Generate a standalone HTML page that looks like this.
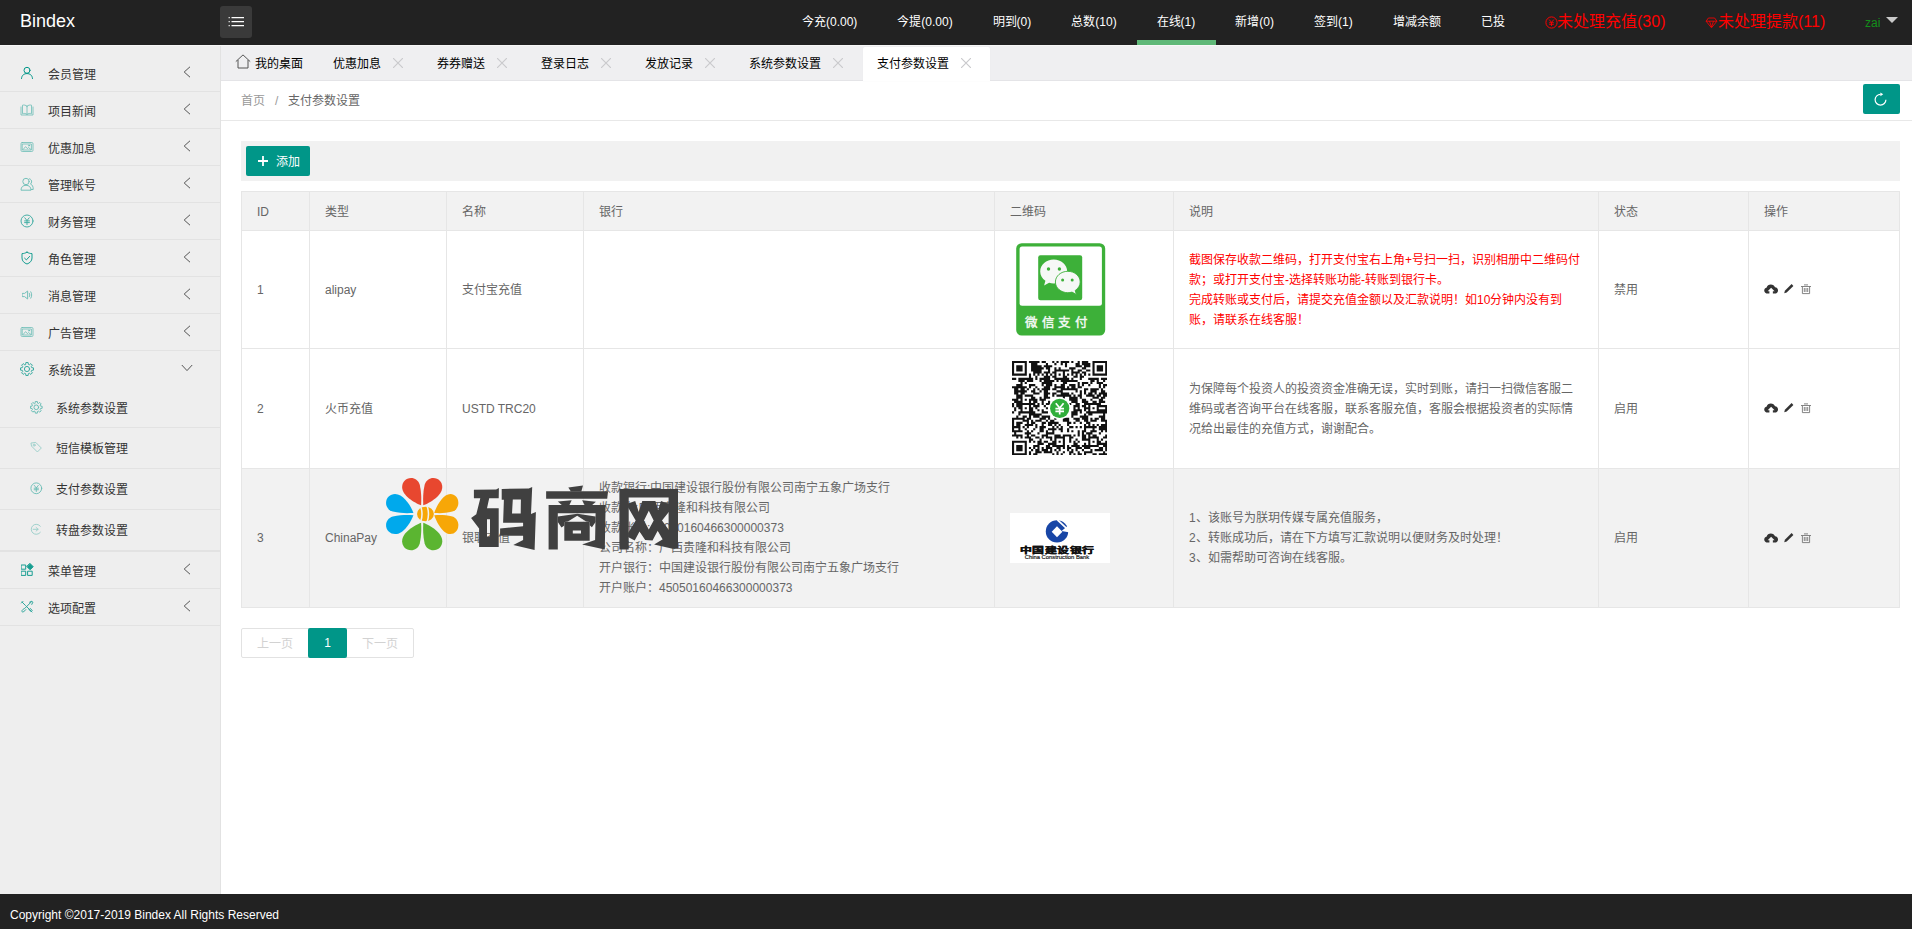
<!DOCTYPE html>
<html lang="zh-CN">
<head>
<meta charset="utf-8">
<title>Bindex</title>
<style>
*{box-sizing:border-box;margin:0;padding:0}
html,body{width:1912px;height:929px;overflow:hidden;background:#fff}
body{font-family:"Liberation Sans",sans-serif;font-size:12px;color:#666;position:relative}
.abs{position:absolute}
.nw{white-space:nowrap}
/* header */
#hd{position:absolute;left:0;top:0;width:1912px;height:45px;background:#222}
#logo{position:absolute;left:20px;top:9px;font-size:18px;color:#fff;line-height:24px}
#ham{position:absolute;left:220px;top:6px;width:32px;height:32px;background:#3a3a3a;border-radius:3px}
.nv{position:absolute;top:0;height:45px;line-height:45px;font-size:12px;color:#fff;white-space:nowrap}
.nv.red{color:#f00;font-size:16px;line-height:43px}
/* sidebar */
#sb{position:absolute;left:0;top:45px;width:221px;height:849px;background:#eee;border-right:1px solid #e2e2e2}
.mi{position:absolute;left:0;width:220px;height:37px;border-bottom:1px solid #e2e2e2;line-height:41px;font-size:12px;color:#333}
.mi span{position:absolute;left:48px;top:0}
.si{position:absolute;left:0;width:220px;height:41px;border-bottom:1px solid #e2e2e2;line-height:42px;font-size:12px;color:#333}
.si span{position:absolute;left:56px;top:0}
/* tabs */
#tabs{position:absolute;left:221px;top:46px;width:1691px;height:35px;background:#efeff1;border-bottom:1px solid #e4e4e7}
.tb{position:absolute;top:0;height:35px;line-height:36px;font-size:12px;color:#000;white-space:nowrap}
/* footer */
#ft{position:absolute;left:0;top:894px;width:1912px;height:35px;background:#222;color:#fff;font-size:12px;line-height:43px;padding-left:10px}
/* table */
.cell{position:absolute;font-size:12px;color:#666;white-space:nowrap;line-height:20px}
.vl{position:absolute;width:1px;background:#e6e6e6;top:191px;height:417px}
.hl{position:absolute;height:1px;background:#e6e6e6;left:241px;width:1659px}
</style>
</head>
<body>
<div id="hd">
  <div id="logo">Bindex</div>
<div id="ham"><svg width="32" height="32" viewBox="0 0 32 32"><g stroke="#fff" stroke-width="1.3"><path d="M11.5 11.6H24M11.5 15.6H24M11.5 19.6H24"/><path d="M8.5 11.6H10M8.5 15.6H10M8.5 19.6H10" opacity=".75"/></g></svg></div>
<div class="nv" style="left:802px">今充(0.00)</div>
<div class="nv" style="left:897.3px">今提(0.00)</div>
<div class="nv" style="left:992.6px">明到(0)</div>
<div class="nv" style="left:1071.3px">总数(10)</div>
<div class="nv" style="left:1156.6px">在线(1)</div>
<div class="nv" style="left:1235.3px">新增(0)</div>
<div class="nv" style="left:1314px">签到(1)</div>
<div class="nv" style="left:1392.6px">增减余额</div>
<div class="nv" style="left:1480.6px">已投</div>
<div class="abs" style="left:1137px;top:40px;width:79px;height:5px;background:#5FB878"></div>
<svg class="abs" style="left:1544.5px;top:16px" width="13" height="13" viewBox="0 0 13 13"><circle cx="6.5" cy="6.5" r="5.6" fill="none" stroke="#f00" stroke-width="1"/><path d="M4.2 3.6L6.5 6.4L8.8 3.6M6.5 6.4V10M4.2 6.7H8.8M4.2 8.3H8.8" fill="none" stroke="#f00" stroke-width=".9"/></svg>
<div class="nv red" style="left:1557px">未处理充值(30)</div>
<svg class="abs" style="left:1705px;top:16.8px" width="13" height="12" viewBox="0 0 13 12"><path d="M3.4 1H9.6L11.9 4.2L6.5 10.8L1.1 4.2ZM1.1 4.2H11.9M4.5 4.2L6.5 10L8.5 4.2" fill="none" stroke="#f00" stroke-width=".85"/></svg>
<div class="nv red" style="left:1718px">未处理提款(11)</div>
<div class="nv" style="left:1865px;color:#12901a;line-height:46px">zai</div>
<div class="abs" style="left:1885.5px;top:17px;width:0;height:0;border-left:6px solid transparent;border-right:6px solid transparent;border-top:6.5px solid #c9c9c9"></div>
</div>
<div id="sb">
<div class="mi" style="top:10px"><svg class="abs" style="left:20px;top:11px;opacity:1" width="14" height="14" viewBox="0 0 14 14" fill="none" stroke="#009688" stroke-width="1" stroke-linecap="round" stroke-linejoin="round"><circle cx="7" cy="4.3" r="3"/><path d="M1.5 12.5C1.8 9 4.2 7.6 7 7.6S12.2 9 12.5 12.5"/></svg><span>会员管理</span><svg class="abs" style="left:183px;top:11px" width="8" height="12" viewBox="0 0 8 12" fill="none" stroke="#555" stroke-width="1"><path d="M7 .8L1.2 6L7 11.2"/></svg></div>
<div class="mi" style="top:47px"><svg class="abs" style="left:20px;top:11px;opacity:0.55" width="14" height="14" viewBox="0 0 14 14" fill="none" stroke="#009688" stroke-width=".8" stroke-linecap="round" stroke-linejoin="round"><path d="M7 3.2C5.8 2 3.8 1.8 2.5 2.2V10.6C3.8 10.2 5.8 10.4 7 11.4C8.2 10.4 10.2 10.2 11.5 10.6V2.2C10.2 1.8 8.2 2 7 3.2ZM7 3.2V11.4M1 4V12H13V4"/></svg><span>项目新闻</span><svg class="abs" style="left:183px;top:11px" width="8" height="12" viewBox="0 0 8 12" fill="none" stroke="#555" stroke-width="1"><path d="M7 .8L1.2 6L7 11.2"/></svg></div>
<div class="mi" style="top:84px"><svg class="abs" style="left:20px;top:11px;opacity:0.55" width="14" height="14" viewBox="0 0 14 14" fill="none" stroke="#009688" stroke-width=".8" stroke-linecap="round" stroke-linejoin="round"><rect x="1" y="2.5" width="12" height="9" rx="1.2"/><rect x="2.6" y="4" width="8.8" height="6"/><path d="M3.2 9.4L5.6 6.6L7.3 8.6L8.6 7.6L10.8 9.4"/><circle cx="9" cy="5.6" r=".6"/></svg><span>优惠加息</span><svg class="abs" style="left:183px;top:11px" width="8" height="12" viewBox="0 0 8 12" fill="none" stroke="#555" stroke-width="1"><path d="M7 .8L1.2 6L7 11.2"/></svg></div>
<div class="mi" style="top:121px"><svg class="abs" style="left:20px;top:11px;opacity:0.5" width="14" height="14" viewBox="0 0 14 14" fill="none" stroke="#009688" stroke-width="1" stroke-linecap="round" stroke-linejoin="round"><circle cx="6" cy="4.5" r="3.2"/><path d="M1 12.8C1 10 3 8.3 6 8.3S11 10 11 12.8Z"/><path d="M9.5 1.8C11 2.2 11.8 3.6 11.6 5C11.5 5.9 11 6.6 10.4 7C12.4 7.8 13.3 9.5 13.2 12.5H11.4"/></svg><span>管理帐号</span><svg class="abs" style="left:183px;top:11px" width="8" height="12" viewBox="0 0 8 12" fill="none" stroke="#555" stroke-width="1"><path d="M7 .8L1.2 6L7 11.2"/></svg></div>
<div class="mi" style="top:158px"><svg class="abs" style="left:20px;top:11px;opacity:0.7" width="14" height="14" viewBox="0 0 14 14" fill="none" stroke="#009688" stroke-width="1" stroke-linecap="round" stroke-linejoin="round"><circle cx="7" cy="7" r="6"/><path d="M4.8 3.8L7 6.6L9.2 3.8M7 6.6V10.6M4.6 6.9H9.4M4.6 8.6H9.4"/></svg><span>财务管理</span><svg class="abs" style="left:183px;top:11px" width="8" height="12" viewBox="0 0 8 12" fill="none" stroke="#555" stroke-width="1"><path d="M7 .8L1.2 6L7 11.2"/></svg></div>
<div class="mi" style="top:195px"><svg class="abs" style="left:20px;top:11px;opacity:0.9" width="14" height="14" viewBox="0 0 14 14" fill="none" stroke="#009688" stroke-width="1" stroke-linecap="round" stroke-linejoin="round"><path d="M7 1.2C8.6 2.2 10.4 2.6 12 2.6V7C12 10 9.8 12 7 13C4.2 12 2 10 2 7V2.6C3.6 2.6 5.4 2.2 7 1.2Z"/><path d="M4.6 7.2L6.4 8.9L9.6 5.4"/></svg><span>角色管理</span><svg class="abs" style="left:183px;top:11px" width="8" height="12" viewBox="0 0 8 12" fill="none" stroke="#555" stroke-width="1"><path d="M7 .8L1.2 6L7 11.2"/></svg></div>
<div class="mi" style="top:232px"><svg class="abs" style="left:20px;top:11px;opacity:0.5" width="14" height="14" viewBox="0 0 14 14" fill="none" stroke="#009688" stroke-width="1" stroke-linecap="round" stroke-linejoin="round"><path d="M2.5 5.4H4.6L7.6 3V11L4.6 8.6H2.5Z"/><path d="M9.3 5.2C10 6.2 10 7.8 9.3 8.8M10.8 3.8C12 5.6 12 8.4 10.8 10.2"/></svg><span>消息管理</span><svg class="abs" style="left:183px;top:11px" width="8" height="12" viewBox="0 0 8 12" fill="none" stroke="#555" stroke-width="1"><path d="M7 .8L1.2 6L7 11.2"/></svg></div>
<div class="mi" style="top:269px"><svg class="abs" style="left:20px;top:11px;opacity:0.55" width="14" height="14" viewBox="0 0 14 14" fill="none" stroke="#009688" stroke-width=".8" stroke-linecap="round" stroke-linejoin="round"><rect x="1" y="2.5" width="12" height="9" rx="1.2"/><rect x="2.6" y="4" width="8.8" height="6"/><path d="M3.2 9.4L5.6 6.6L7.3 8.6L8.6 7.6L10.8 9.4"/><circle cx="9" cy="5.6" r=".6"/></svg><span>广告管理</span><svg class="abs" style="left:183px;top:11px" width="8" height="12" viewBox="0 0 8 12" fill="none" stroke="#555" stroke-width="1"><path d="M7 .8L1.2 6L7 11.2"/></svg></div>
<div class="mi" style="top:306px;border-bottom:none"><svg class="abs" style="left:20px;top:11px;opacity:0.75" width="14" height="14" viewBox="0 0 14 14" fill="none" stroke="#009688" stroke-width="1" stroke-linecap="round" stroke-linejoin="round"><circle cx="7" cy="7" r="2.6"/><path d="M5.69 2.28L5.88 0.50L8.12 0.50L8.31 2.28L9.42 2.74L10.81 1.61L12.39 3.19L11.26 4.58L11.72 5.69L13.50 5.88L13.50 8.12L11.72 8.31L11.26 9.42L12.39 10.81L10.81 12.39L9.42 11.26L8.31 11.72L8.12 13.50L5.88 13.50L5.69 11.72L4.58 11.26L3.19 12.39L1.61 10.81L2.74 9.42L2.28 8.31L0.50 8.12L0.50 5.88L2.28 5.69L2.74 4.58L1.61 3.19L3.19 1.61L4.58 2.74Z"/></svg><span>系统设置</span><svg class="abs" style="left:181px;top:13px" width="12" height="8" viewBox="0 0 12 8" fill="none" stroke="#555" stroke-width="1"><path d="M.8 1L6 6.6L11.2 1"/></svg></div>
<div class="si" style="top:343px;height:40px;"><svg class="abs" style="left:30px;top:13px;opacity:0.6000000000000001" width="12.6" height="12.6" viewBox="0 0 14 14" fill="none" stroke="#009688" stroke-width="1" stroke-linecap="round" stroke-linejoin="round"><circle cx="7" cy="7" r="2.6"/><path d="M5.69 2.28L5.88 0.50L8.12 0.50L8.31 2.28L9.42 2.74L10.81 1.61L12.39 3.19L11.26 4.58L11.72 5.69L13.50 5.88L13.50 8.12L11.72 8.31L11.26 9.42L12.39 10.81L10.81 12.39L9.42 11.26L8.31 11.72L8.12 13.50L5.88 13.50L5.69 11.72L4.58 11.26L3.19 12.39L1.61 10.81L2.74 9.42L2.28 8.31L0.50 8.12L0.50 5.88L2.28 5.69L2.74 4.58L1.61 3.19L3.19 1.61L4.58 2.74Z"/></svg><span>系统参数设置</span></div>
<div class="si" style="top:383px;height:41px;"><svg class="abs" style="left:30px;top:13px;opacity:0.36000000000000004" width="12.6" height="12.6" viewBox="0 0 14 14" fill="none" stroke="#009688" stroke-width="1" stroke-linecap="round" stroke-linejoin="round"><path d="M1.5 2.2L6.4 1.6L12.6 7.8L8.2 12.2L2 6Z"/><circle cx="4.6" cy="4.6" r="1.1"/></svg><span>短信模板管理</span></div>
<div class="si" style="top:424px;height:41px;"><svg class="abs" style="left:30px;top:13px;opacity:0.5599999999999999" width="12.6" height="12.6" viewBox="0 0 14 14" fill="none" stroke="#009688" stroke-width="1" stroke-linecap="round" stroke-linejoin="round"><circle cx="7" cy="7" r="6"/><path d="M4.8 3.8L7 6.6L9.2 3.8M7 6.6V10.6M4.6 6.9H9.4M4.6 8.6H9.4"/></svg><span>支付参数设置</span></div>
<div class="si" style="top:465px;height:42px;border-bottom:2px solid #e2e2e2"><svg class="abs" style="left:30px;top:13px;opacity:0.36000000000000004" width="12.6" height="12.6" viewBox="0 0 14 14" fill="none" stroke="#009688" stroke-width="1" stroke-linecap="round" stroke-linejoin="round"><path d="M11.5 3.6A5.6 5.6 0 1 0 11.5 10.4"/><path d="M3.5 7H9M6.8 5L9 7L6.8 9"/></svg><span>转盘参数设置</span></div>
<div class="mi" style="top:507px"><svg class="abs" style="left:20px;top:11px;opacity:0.9" width="14" height="14" viewBox="0 0 14 14" fill="none" stroke="#009688" stroke-width="1" stroke-linecap="round" stroke-linejoin="round"><rect x="1.5" y="2" width="4.2" height="4.2"/><rect x="1.5" y="8.2" width="4.2" height="4.2"/><rect x="8" y="8.2" width="4.2" height="4.2"/><path d="M10.1 .6L13.2 3.7L10.1 6.8L7 3.7Z" fill="#009688"/></svg><span>菜单管理</span><svg class="abs" style="left:183px;top:11px" width="8" height="12" viewBox="0 0 8 12" fill="none" stroke="#555" stroke-width="1"><path d="M7 .8L1.2 6L7 11.2"/></svg></div>
<div class="mi" style="top:544px"><svg class="abs" style="left:20px;top:11px;opacity:0.8" width="14" height="14" viewBox="0 0 14 14" fill="none" stroke="#009688" stroke-width="1" stroke-linecap="round" stroke-linejoin="round"><path d="M2 2L5 5M3 1.4L1.4 3M5.6 5.6L12 12M9 9.6L11 11.6L12.2 10.4L10.2 8.4M11.6 1.6L5 8.2M4.4 8.2L2 10.6C1.4 11.2 2.6 12.6 3.4 12L5.8 9.6M9.6 2.2L11.8 1.2L12.8 2.2L11.8 4.4"/></svg><span>选项配置</span><svg class="abs" style="left:183px;top:11px" width="8" height="12" viewBox="0 0 8 12" fill="none" stroke="#555" stroke-width="1"><path d="M7 .8L1.2 6L7 11.2"/></svg></div>
</div>
<div id="tabs">
<div class="tb" style="left:0;width:98px"><svg class="abs" style="left:14px;top:8px" width="16" height="15" viewBox="0 0 16 15" fill="none" stroke="#555" stroke-width="1"><path d="M.8 7.6L8 .9L15.2 7.6M3 6V14H13V6"/></svg><span class="abs" style="left:34px">我的桌面</span></div>
<span class="tb" style="left:112px">优惠加息</span><svg class="abs" style="left:172.0px;top:12.2px" width="10" height="10" viewBox="0 0 10 10" stroke="#c9c9cc" stroke-width="1.15"><path d="M0 0L10 10M10 0L0 10"/></svg>
<span class="tb" style="left:216px">券券赠送</span><svg class="abs" style="left:276.0px;top:12.2px" width="10" height="10" viewBox="0 0 10 10" stroke="#c9c9cc" stroke-width="1.15"><path d="M0 0L10 10M10 0L0 10"/></svg>
<span class="tb" style="left:320px">登录日志</span><svg class="abs" style="left:380.0px;top:12.2px" width="10" height="10" viewBox="0 0 10 10" stroke="#c9c9cc" stroke-width="1.15"><path d="M0 0L10 10M10 0L0 10"/></svg>
<span class="tb" style="left:424px">发放记录</span><svg class="abs" style="left:484.0px;top:12.2px" width="10" height="10" viewBox="0 0 10 10" stroke="#c9c9cc" stroke-width="1.15"><path d="M0 0L10 10M10 0L0 10"/></svg>
<span class="tb" style="left:528px">系统参数设置</span><svg class="abs" style="left:612.0px;top:12.2px" width="10" height="10" viewBox="0 0 10 10" stroke="#c9c9cc" stroke-width="1.15"><path d="M0 0L10 10M10 0L0 10"/></svg>
<div class="abs" style="left:642px;top:1px;width:127px;height:34px;background:#fff;border-radius:2px 2px 0 0;box-shadow:0 0 1px #e4e4e8"></div>
<span class="tb" style="left:656px">支付参数设置</span><svg class="abs" style="left:740.0px;top:12.2px" width="10" height="10" viewBox="0 0 10 10" stroke="#c9c9cc" stroke-width="1.15"><path d="M0 0L10 10M10 0L0 10"/></svg>
</div>
<div id="main">
<div class="abs" style="left:0;top:45px;width:1912px;height:1px;background:#f7f7f7"></div>
<div class="abs" style="left:221px;top:120px;width:1691px;height:1px;background:#e8e8e8"></div>
<div class="cell" style="left:241px;top:90.5px;color:#999">首页</div>
<div class="cell" style="left:275px;top:90.5px;color:#999">/</div>
<div class="cell" style="left:288px;top:90.5px;color:#666">支付参数设置</div>
<div class="abs" style="left:1863px;top:84px;width:37px;height:30px;background:#009688;border-radius:2px"><svg class="abs" style="left:9.8px;top:7.6px" width="15" height="15" viewBox="0 0 15 15" fill="none" stroke="#fff" stroke-width="1.2"><path d="M7.6 2.3A5.4 5.4 0 1 0 12.9 7.7"/><path d="M7.4 .5L10.2 2.3L7.4 4.2Z" fill="#fff" stroke="none"/></svg></div>
<div class="abs" style="left:241px;top:141px;width:1659px;height:40px;background:#f1f1f1"></div>
<div class="abs" style="left:246px;top:146px;width:64px;height:30px;background:#009688;border-radius:2px"><svg class="abs" style="left:12px;top:10px" width="10" height="10" viewBox="0 0 10 10" stroke="#fff" stroke-width="1.8"><path d="M5 0V10M0 5H10"/></svg><span class="abs nw" style="left:30px;top:0;line-height:33px;color:#fff;font-size:12px">添加</span></div>
<div class="abs" style="left:241px;top:191px;width:1659px;height:40px;background:#f2f2f2"></div>
<div class="abs" style="left:241px;top:468px;width:1659px;height:140px;background:#f2f2f2"></div>
<div class="hl" style="top:191px"></div>
<div class="hl" style="top:230px"></div>
<div class="hl" style="top:348px"></div>
<div class="hl" style="top:468px"></div>
<div class="hl" style="top:607px"></div>
<div class="vl" style="left:241px"></div>
<div class="vl" style="left:309px"></div>
<div class="vl" style="left:446px"></div>
<div class="vl" style="left:583px"></div>
<div class="vl" style="left:994px"></div>
<div class="vl" style="left:1173px"></div>
<div class="vl" style="left:1598px"></div>
<div class="vl" style="left:1748px"></div>
<div class="vl" style="left:1899px"></div>
<div class="cell" style="left:257px;top:201.5px">ID</div>
<div class="cell" style="left:325px;top:201.5px">类型</div>
<div class="cell" style="left:462px;top:201.5px">名称</div>
<div class="cell" style="left:599px;top:201.5px">银行</div>
<div class="cell" style="left:1010px;top:201.5px">二维码</div>
<div class="cell" style="left:1189px;top:201.5px">说明</div>
<div class="cell" style="left:1614px;top:201.5px">状态</div>
<div class="cell" style="left:1764px;top:201.5px">操作</div>
<div class="cell" style="left:257px;top:279.5px">1</div>
<div class="cell" style="left:325px;top:279.5px">alipay</div>
<div class="cell" style="left:462px;top:279.5px">支付宝充值</div>
<div class="cell" style="left:1189px;top:249.5px;color:#f00">截图保存收款二维码，打开支付宝右上角+号扫一扫，识别相册中二维码付<br>款；或打开支付宝-选择转账功能-转账到银行卡。<br>完成转账或支付后，请提交充值金额以及汇款说明！如10分钟内没有到<br>账，请联系在线客服！</div>
<div class="cell" style="left:1614px;top:279.5px">禁用</div>
<svg class="abs" style="left:1764px;top:283px" width="50" height="12" viewBox="0 0 50 12"><path transform="translate(0 0) scale(1.08 1.02)" d="M3.6 10.4C1.6 10.4 .2 9 .2 7.3C.2 5.8 1.2 4.7 2.5 4.4C2.9 2.6 4.4 1.4 6.3 1.4C8.2 1.4 9.7 2.6 10.2 4.2C11.9 4.4 13 5.6 13 7.3C13 9 11.7 10.4 9.9 10.4H8.2V8H9.8L6.6 4.6L3.4 8H5V10.4Z" fill="#333"/><path d="M20.2 10.2L20.9 7.8L27.6 1.1L29.4 2.9L22.7 9.6Z" fill="#333"/><g stroke="#777" fill="none" stroke-width=".9"><path d="M37 3.5H47M38.4 3.5V10.6H45.6V3.5M40 1.9H44M40.3 5V9M42 5V9M43.7 5V9"/></g></svg>
<div class="cell" style="left:257px;top:399px">2</div>
<div class="cell" style="left:325px;top:399px">火币充值</div>
<div class="cell" style="left:462px;top:399px">USTD TRC20</div>
<div class="cell" style="left:1189px;top:379px">为保障每个投资人的投资资金准确无误，实时到账，请扫一扫微信客服二<br>维码或者咨询平台在线客服，联系客服充值，客服会根据投资者的实际情<br>况给出最佳的充值方式，谢谢配合。</div>
<div class="cell" style="left:1614px;top:399px">启用</div>
<svg class="abs" style="left:1764px;top:402px" width="50" height="12" viewBox="0 0 50 12"><path transform="translate(0 0) scale(1.08 1.02)" d="M3.6 10.4C1.6 10.4 .2 9 .2 7.3C.2 5.8 1.2 4.7 2.5 4.4C2.9 2.6 4.4 1.4 6.3 1.4C8.2 1.4 9.7 2.6 10.2 4.2C11.9 4.4 13 5.6 13 7.3C13 9 11.7 10.4 9.9 10.4H8.2V8H9.8L6.6 4.6L3.4 8H5V10.4Z" fill="#333"/><path d="M20.2 10.2L20.9 7.8L27.6 1.1L29.4 2.9L22.7 9.6Z" fill="#333"/><g stroke="#777" fill="none" stroke-width=".9"><path d="M37 3.5H47M38.4 3.5V10.6H45.6V3.5M40 1.9H44M40.3 5V9M42 5V9M43.7 5V9"/></g></svg>
<div class="cell" style="left:257px;top:528px">3</div>
<div class="cell" style="left:325px;top:528px">ChinaPay</div>
<div class="cell" style="left:462px;top:528px">银联充值</div>
<div class="cell" style="left:599px;top:478px">收款银行:中国建设银行股份有限公司南宁五象广场支行<br>收款人:广西贵隆和科技有限公司<br>收款账号:45050160466300000373<br>公司名称：广西贵隆和科技有限公司<br>开户银行：中国建设银行股份有限公司南宁五象广场支行<br>开户账户：45050160466300000373</div>
<div class="cell" style="left:1189px;top:508px">1、该账号为朕玥传媒专属充值服务，<br>2、转账成功后，请在下方填写汇款说明以便财务及时处理！<br>3、如需帮助可咨询在线客服。</div>
<div class="cell" style="left:1614px;top:528px">启用</div>
<svg class="abs" style="left:1764px;top:532px" width="50" height="12" viewBox="0 0 50 12"><path transform="translate(0 0) scale(1.08 1.02)" d="M3.6 10.4C1.6 10.4 .2 9 .2 7.3C.2 5.8 1.2 4.7 2.5 4.4C2.9 2.6 4.4 1.4 6.3 1.4C8.2 1.4 9.7 2.6 10.2 4.2C11.9 4.4 13 5.6 13 7.3C13 9 11.7 10.4 9.9 10.4H8.2V8H9.8L6.6 4.6L3.4 8H5V10.4Z" fill="#333"/><path d="M20.2 10.2L20.9 7.8L27.6 1.1L29.4 2.9L22.7 9.6Z" fill="#333"/><g stroke="#777" fill="none" stroke-width=".9"><path d="M37 3.5H47M38.4 3.5V10.6H45.6V3.5M40 1.9H44M40.3 5V9M42 5V9M43.7 5V9"/></g></svg>
<div class="abs" style="left:241px;top:628px;width:173px;height:30px;border:1px solid #e2e2e2;border-radius:2px"></div>
<div class="abs" style="left:308px;top:628px;width:39px;height:30px;background:#009688;color:#fff;text-align:center;line-height:30px;font-size:12px;border-radius:2px">1</div>
<div class="cell" style="left:257px;top:634px;color:#d2d2d2">上一页</div>
<div class="cell" style="left:362px;top:634px;color:#d2d2d2">下一页</div>
<svg class="abs" style="left:1010px;top:240px" width="100" height="99" viewBox="1010 240 100 99">
<rect x="1016.2" y="243.2" width="89" height="92.4" rx="5.5" fill="#3db039"/>
<rect x="1019.6" y="246.4" width="82.3" height="59.4" rx="2.5" fill="#fff"/>
<rect x="1038.2" y="255.2" width="44" height="45" rx="2.2" fill="#3db039"/>
<path d="M1053.7 259.6c-7.4 0-13.5 5.3-13.5 11.9c0 3.8 2 7.1 5.200000000000001 9.3l-1.3 4.6l5-2.7c1.4 .4 3 .7 4.6 .7c7.4 0 13.5-5.300000000000001 13.5-11.9s-6.1-11.9-13.5-11.9z" fill="#f6f8f6"/>
<path d="M1067.8 271.3c-6.9 0-12.4 4.8-12.4 10.7s5.5 10.7 12.4 10.7c1.5 0 2.9-.2 4.2-.6l4.400000000000001 2.4l-1.2-4c3-2 5-5 5-8.5c0-5.9-5.5-10.7-12.4-10.7z" fill="#f6f8f6" stroke="#3db039" stroke-width=".9"/>
<circle cx="1048.5" cy="269" r="1.7" fill="#3db039"/><circle cx="1059.4" cy="269" r="1.7" fill="#3db039"/>
<circle cx="1062.6" cy="280" r="1.5" fill="#3db039"/><circle cx="1072.2" cy="280" r="1.5" fill="#3db039"/>
<text x="1058.4" y="326.6" text-anchor="middle" font-family="Liberation Sans,sans-serif" font-weight="bold" font-size="12.5" letter-spacing="3.6" fill="#eef7ee">微信支付</text>
</svg>
<svg class="abs" style="left:1011.9px;top:360.7px" width="95.4" height="94.5" viewBox="0 0 95.4 94.5" shape-rendering="auto"><path d="M0.00 0.00h14.82v2.10h-14.82zM16.94 0.00h10.59v2.10h-10.59zM29.65 0.00h4.24v2.10h-4.24zM40.24 0.00h2.12v2.10h-2.12zM44.47 0.00h2.12v2.10h-2.12zM48.71 0.00h8.47v2.10h-8.47zM59.30 0.00h2.12v2.10h-2.12zM65.65 0.00h2.12v2.10h-2.12zM69.89 0.00h6.35v2.10h-6.35zM80.48 0.00h14.82v2.10h-14.82zM0.00 2.10h2.12v2.10h-2.12zM12.71 2.10h2.12v2.10h-2.12zM19.06 2.10h6.35v2.10h-6.35zM33.88 2.10h2.12v2.10h-2.12zM42.36 2.10h2.12v2.10h-2.12zM48.71 2.10h2.12v2.10h-2.12zM52.94 2.10h2.12v2.10h-2.12zM63.53 2.10h4.24v2.10h-4.24zM69.89 2.10h8.47v2.10h-8.47zM80.48 2.10h2.12v2.10h-2.12zM93.18 2.10h2.12v2.10h-2.12zM0.00 4.20h2.12v2.10h-2.12zM4.24 4.20h6.35v2.10h-6.35zM12.71 4.20h2.12v2.10h-2.12zM19.06 4.20h10.59v2.10h-10.59zM31.77 4.20h8.47v2.10h-8.47zM52.94 4.20h2.12v2.10h-2.12zM63.53 4.20h6.35v2.10h-6.35zM72.00 4.20h6.35v2.10h-6.35zM80.48 4.20h2.12v2.10h-2.12zM84.71 4.20h6.35v2.10h-6.35zM93.18 4.20h2.12v2.10h-2.12zM0.00 6.29h2.12v2.10h-2.12zM4.24 6.29h6.35v2.10h-6.35zM12.71 6.29h2.12v2.10h-2.12zM19.06 6.29h12.71v2.10h-12.71zM33.88 6.29h4.24v2.10h-4.24zM42.36 6.29h2.12v2.10h-2.12zM46.59 6.29h2.12v2.10h-2.12zM57.18 6.29h6.35v2.10h-6.35zM69.89 6.29h4.24v2.10h-4.24zM80.48 6.29h2.12v2.10h-2.12zM84.71 6.29h6.35v2.10h-6.35zM93.18 6.29h2.12v2.10h-2.12zM0.00 8.39h2.12v2.10h-2.12zM4.24 8.39h6.35v2.10h-6.35zM12.71 8.39h2.12v2.10h-2.12zM19.06 8.39h10.59v2.10h-10.59zM36.00 8.39h2.12v2.10h-2.12zM42.36 8.39h14.82v2.10h-14.82zM59.30 8.39h2.12v2.10h-2.12zM65.65 8.39h4.24v2.10h-4.24zM74.12 8.39h4.24v2.10h-4.24zM80.48 8.39h2.12v2.10h-2.12zM84.71 8.39h6.35v2.10h-6.35zM93.18 8.39h2.12v2.10h-2.12zM0.00 10.49h2.12v2.10h-2.12zM12.71 10.49h2.12v2.10h-2.12zM21.18 10.49h8.47v2.10h-8.47zM31.77 10.49h6.35v2.10h-6.35zM40.24 10.49h4.24v2.10h-4.24zM50.83 10.49h2.12v2.10h-2.12zM59.30 10.49h8.47v2.10h-8.47zM69.89 10.49h4.24v2.10h-4.24zM80.48 10.49h2.12v2.10h-2.12zM93.18 10.49h2.12v2.10h-2.12zM0.00 12.59h14.82v2.10h-14.82zM16.94 12.59h2.12v2.10h-2.12zM21.18 12.59h2.12v2.10h-2.12zM25.41 12.59h2.12v2.10h-2.12zM29.65 12.59h2.12v2.10h-2.12zM33.88 12.59h2.12v2.10h-2.12zM38.12 12.59h2.12v2.10h-2.12zM42.36 12.59h2.12v2.10h-2.12zM46.59 12.59h2.12v2.10h-2.12zM50.83 12.59h2.12v2.10h-2.12zM55.06 12.59h2.12v2.10h-2.12zM59.30 12.59h2.12v2.10h-2.12zM63.53 12.59h2.12v2.10h-2.12zM67.77 12.59h2.12v2.10h-2.12zM72.00 12.59h2.12v2.10h-2.12zM76.24 12.59h2.12v2.10h-2.12zM80.48 12.59h14.82v2.10h-14.82zM16.94 14.68h2.12v2.10h-2.12zM23.30 14.68h2.12v2.10h-2.12zM31.77 14.68h6.35v2.10h-6.35zM40.24 14.68h4.24v2.10h-4.24zM50.83 14.68h4.24v2.10h-4.24zM61.42 14.68h4.24v2.10h-4.24zM67.77 14.68h4.24v2.10h-4.24zM0.00 16.78h4.24v2.10h-4.24zM6.35 16.78h14.82v2.10h-14.82zM23.30 16.78h2.12v2.10h-2.12zM27.53 16.78h10.59v2.10h-10.59zM42.36 16.78h14.82v2.10h-14.82zM59.30 16.78h2.12v2.10h-2.12zM67.77 16.78h2.12v2.10h-2.12zM76.24 16.78h10.59v2.10h-10.59zM88.95 16.78h6.35v2.10h-6.35zM6.35 18.88h6.35v2.10h-6.35zM14.82 18.88h6.35v2.10h-6.35zM27.53 18.88h2.12v2.10h-2.12zM31.77 18.88h10.59v2.10h-10.59zM44.47 18.88h2.12v2.10h-2.12zM48.71 18.88h16.94v2.10h-16.94zM78.36 18.88h4.24v2.10h-4.24zM84.71 18.88h2.12v2.10h-2.12zM91.06 18.88h2.12v2.10h-2.12zM8.47 20.98h2.12v2.10h-2.12zM12.71 20.98h2.12v2.10h-2.12zM29.65 20.98h10.59v2.10h-10.59zM50.83 20.98h4.24v2.10h-4.24zM65.65 20.98h2.12v2.10h-2.12zM69.89 20.98h6.35v2.10h-6.35zM78.36 20.98h2.12v2.10h-2.12zM84.71 20.98h6.35v2.10h-6.35zM4.24 23.08h6.35v2.10h-6.35zM16.94 23.08h6.35v2.10h-6.35zM29.65 23.08h2.12v2.10h-2.12zM33.88 23.08h6.35v2.10h-6.35zM42.36 23.08h2.12v2.10h-2.12zM48.71 23.08h4.24v2.10h-4.24zM57.18 23.08h6.35v2.10h-6.35zM65.65 23.08h2.12v2.10h-2.12zM69.89 23.08h2.12v2.10h-2.12zM76.24 23.08h2.12v2.10h-2.12zM86.83 23.08h2.12v2.10h-2.12zM91.06 23.08h4.24v2.10h-4.24zM0.00 25.17h14.82v2.10h-14.82zM16.94 25.17h2.12v2.10h-2.12zM23.30 25.17h2.12v2.10h-2.12zM31.77 25.17h6.35v2.10h-6.35zM42.36 25.17h10.59v2.10h-10.59zM55.06 25.17h2.12v2.10h-2.12zM59.30 25.17h4.24v2.10h-4.24zM65.65 25.17h4.24v2.10h-4.24zM86.83 25.17h2.12v2.10h-2.12zM91.06 25.17h2.12v2.10h-2.12zM2.12 27.27h4.24v2.10h-4.24zM8.47 27.27h4.24v2.10h-4.24zM14.82 27.27h2.12v2.10h-2.12zM21.18 27.27h2.12v2.10h-2.12zM25.41 27.27h2.12v2.10h-2.12zM29.65 27.27h8.47v2.10h-8.47zM40.24 27.27h4.24v2.10h-4.24zM48.71 27.27h16.94v2.10h-16.94zM72.00 27.27h4.24v2.10h-4.24zM78.36 27.27h8.47v2.10h-8.47zM88.95 27.27h2.12v2.10h-2.12zM2.12 29.37h12.71v2.10h-12.71zM19.06 29.37h4.24v2.10h-4.24zM27.53 29.37h2.12v2.10h-2.12zM31.77 29.37h4.24v2.10h-4.24zM44.47 29.37h6.35v2.10h-6.35zM63.53 29.37h2.12v2.10h-2.12zM67.77 29.37h2.12v2.10h-2.12zM72.00 29.37h2.12v2.10h-2.12zM78.36 29.37h6.35v2.10h-6.35zM88.95 29.37h4.24v2.10h-4.24zM2.12 31.47h4.24v2.10h-4.24zM8.47 31.47h4.24v2.10h-4.24zM21.18 31.47h6.35v2.10h-6.35zM31.77 31.47h6.35v2.10h-6.35zM40.24 31.47h4.24v2.10h-4.24zM48.71 31.47h8.47v2.10h-8.47zM59.30 31.47h2.12v2.10h-2.12zM67.77 31.47h2.12v2.10h-2.12zM72.00 31.47h2.12v2.10h-2.12zM76.24 31.47h4.24v2.10h-4.24zM82.59 31.47h2.12v2.10h-2.12zM86.83 31.47h8.47v2.10h-8.47zM4.24 33.56h6.35v2.10h-6.35zM12.71 33.56h8.47v2.10h-8.47zM31.77 33.56h4.24v2.10h-4.24zM40.24 33.56h2.12v2.10h-2.12zM44.47 33.56h14.82v2.10h-14.82zM61.42 33.56h2.12v2.10h-2.12zM65.65 33.56h4.24v2.10h-4.24zM74.12 33.56h8.47v2.10h-8.47zM84.71 33.56h4.24v2.10h-4.24zM91.06 33.56h4.24v2.10h-4.24zM4.24 35.66h6.35v2.10h-6.35zM19.06 35.66h4.24v2.10h-4.24zM27.53 35.66h2.12v2.10h-2.12zM31.77 35.66h6.35v2.10h-6.35zM50.83 35.66h2.12v2.10h-2.12zM57.18 35.66h8.47v2.10h-8.47zM67.77 35.66h2.12v2.10h-2.12zM80.48 35.66h6.35v2.10h-6.35zM88.95 35.66h4.24v2.10h-4.24zM0.00 37.76h6.35v2.10h-6.35zM8.47 37.76h2.12v2.10h-2.12zM12.71 37.76h2.12v2.10h-2.12zM16.94 37.76h8.47v2.10h-8.47zM27.53 37.76h6.35v2.10h-6.35zM57.18 37.76h8.47v2.10h-8.47zM69.89 37.76h4.24v2.10h-4.24zM78.36 37.76h2.12v2.10h-2.12zM86.83 37.76h4.24v2.10h-4.24zM2.12 39.86h8.47v2.10h-8.47zM16.94 39.86h2.12v2.10h-2.12zM21.18 39.86h4.24v2.10h-4.24zM29.65 39.86h2.12v2.10h-2.12zM36.00 39.86h2.12v2.10h-2.12zM59.30 39.86h6.35v2.10h-6.35zM69.89 39.86h6.35v2.10h-6.35zM80.48 39.86h4.24v2.10h-4.24zM86.83 39.86h6.35v2.10h-6.35zM0.00 41.96h2.12v2.10h-2.12zM4.24 41.96h19.06v2.10h-19.06zM25.41 41.96h2.12v2.10h-2.12zM29.65 41.96h2.12v2.10h-2.12zM33.88 41.96h4.24v2.10h-4.24zM57.18 41.96h2.12v2.10h-2.12zM63.53 41.96h4.24v2.10h-4.24zM72.00 41.96h16.94v2.10h-16.94zM0.00 44.05h2.12v2.10h-2.12zM4.24 44.05h6.35v2.10h-6.35zM16.94 44.05h2.12v2.10h-2.12zM21.18 44.05h6.35v2.10h-6.35zM31.77 44.05h2.12v2.10h-2.12zM61.42 44.05h6.35v2.10h-6.35zM69.89 44.05h4.24v2.10h-4.24zM76.24 44.05h2.12v2.10h-2.12zM84.71 44.05h10.59v2.10h-10.59zM2.12 46.15h2.12v2.10h-2.12zM6.35 46.15h4.24v2.10h-4.24zM12.71 46.15h2.12v2.10h-2.12zM16.94 46.15h4.24v2.10h-4.24zM23.30 46.15h2.12v2.10h-2.12zM33.88 46.15h2.12v2.10h-2.12zM61.42 46.15h2.12v2.10h-2.12zM65.65 46.15h2.12v2.10h-2.12zM72.00 46.15h6.35v2.10h-6.35zM80.48 46.15h2.12v2.10h-2.12zM84.71 46.15h2.12v2.10h-2.12zM93.18 46.15h2.12v2.10h-2.12zM2.12 48.25h2.12v2.10h-2.12zM8.47 48.25h2.12v2.10h-2.12zM16.94 48.25h4.24v2.10h-4.24zM25.41 48.25h2.12v2.10h-2.12zM29.65 48.25h2.12v2.10h-2.12zM61.42 48.25h8.47v2.10h-8.47zM72.00 48.25h2.12v2.10h-2.12zM76.24 48.25h2.12v2.10h-2.12zM84.71 48.25h10.59v2.10h-10.59zM0.00 50.35h2.12v2.10h-2.12zM6.35 50.35h16.94v2.10h-16.94zM29.65 50.35h6.35v2.10h-6.35zM59.30 50.35h6.35v2.10h-6.35zM67.77 50.35h2.12v2.10h-2.12zM74.12 50.35h21.18v2.10h-21.18zM6.35 52.44h2.12v2.10h-2.12zM16.94 52.44h12.71v2.10h-12.71zM59.30 52.44h6.35v2.10h-6.35zM72.00 52.44h2.12v2.10h-2.12zM76.24 52.44h4.24v2.10h-4.24zM91.06 52.44h2.12v2.10h-2.12zM4.24 54.54h2.12v2.10h-2.12zM10.59 54.54h4.24v2.10h-4.24zM16.94 54.54h2.12v2.10h-2.12zM21.18 54.54h6.35v2.10h-6.35zM29.65 54.54h8.47v2.10h-8.47zM59.30 54.54h2.12v2.10h-2.12zM67.77 54.54h8.47v2.10h-8.47zM86.83 54.54h6.35v2.10h-6.35zM0.00 56.64h12.71v2.10h-12.71zM14.82 56.64h4.24v2.10h-4.24zM27.53 56.64h6.35v2.10h-6.35zM36.00 56.64h2.12v2.10h-2.12zM42.36 56.64h2.12v2.10h-2.12zM50.83 56.64h6.35v2.10h-6.35zM61.42 56.64h6.35v2.10h-6.35zM69.89 56.64h6.35v2.10h-6.35zM78.36 56.64h2.12v2.10h-2.12zM82.59 56.64h4.24v2.10h-4.24zM88.95 56.64h4.24v2.10h-4.24zM0.00 58.74h2.12v2.10h-2.12zM10.59 58.74h6.35v2.10h-6.35zM19.06 58.74h2.12v2.10h-2.12zM23.30 58.74h6.35v2.10h-6.35zM33.88 58.74h2.12v2.10h-2.12zM38.12 58.74h4.24v2.10h-4.24zM50.83 58.74h6.35v2.10h-6.35zM63.53 58.74h4.24v2.10h-4.24zM72.00 58.74h4.24v2.10h-4.24zM78.36 58.74h6.35v2.10h-6.35zM88.95 58.74h6.35v2.10h-6.35zM0.00 60.84h2.12v2.10h-2.12zM4.24 60.84h6.35v2.10h-6.35zM14.82 60.84h2.12v2.10h-2.12zM19.06 60.84h4.24v2.10h-4.24zM29.65 60.84h4.24v2.10h-4.24zM36.00 60.84h10.59v2.10h-10.59zM55.06 60.84h4.24v2.10h-4.24zM61.42 60.84h2.12v2.10h-2.12zM67.77 60.84h2.12v2.10h-2.12zM74.12 60.84h4.24v2.10h-4.24zM93.18 60.84h2.12v2.10h-2.12zM0.00 62.93h2.12v2.10h-2.12zM4.24 62.93h4.24v2.10h-4.24zM12.71 62.93h8.47v2.10h-8.47zM23.30 62.93h2.12v2.10h-2.12zM29.65 62.93h2.12v2.10h-2.12zM36.00 62.93h4.24v2.10h-4.24zM42.36 62.93h2.12v2.10h-2.12zM46.59 62.93h2.12v2.10h-2.12zM55.06 62.93h2.12v2.10h-2.12zM72.00 62.93h2.12v2.10h-2.12zM76.24 62.93h2.12v2.10h-2.12zM80.48 62.93h2.12v2.10h-2.12zM84.71 62.93h2.12v2.10h-2.12zM88.95 62.93h6.35v2.10h-6.35zM0.00 65.03h8.47v2.10h-8.47zM10.59 65.03h2.12v2.10h-2.12zM14.82 65.03h2.12v2.10h-2.12zM23.30 65.03h2.12v2.10h-2.12zM27.53 65.03h6.35v2.10h-6.35zM40.24 65.03h2.12v2.10h-2.12zM44.47 65.03h2.12v2.10h-2.12zM48.71 65.03h2.12v2.10h-2.12zM57.18 65.03h4.24v2.10h-4.24zM63.53 65.03h2.12v2.10h-2.12zM67.77 65.03h2.12v2.10h-2.12zM72.00 65.03h12.71v2.10h-12.71zM86.83 65.03h8.47v2.10h-8.47zM0.00 67.13h2.12v2.10h-2.12zM6.35 67.13h2.12v2.10h-2.12zM12.71 67.13h2.12v2.10h-2.12zM21.18 67.13h2.12v2.10h-2.12zM27.53 67.13h4.24v2.10h-4.24zM36.00 67.13h8.47v2.10h-8.47zM46.59 67.13h4.24v2.10h-4.24zM55.06 67.13h2.12v2.10h-2.12zM72.00 67.13h2.12v2.10h-2.12zM80.48 67.13h2.12v2.10h-2.12zM86.83 67.13h8.47v2.10h-8.47zM0.00 69.23h10.59v2.10h-10.59zM14.82 69.23h2.12v2.10h-2.12zM19.06 69.23h2.12v2.10h-2.12zM27.53 69.23h4.24v2.10h-4.24zM33.88 69.23h2.12v2.10h-2.12zM40.24 69.23h2.12v2.10h-2.12zM48.71 69.23h2.12v2.10h-2.12zM55.06 69.23h2.12v2.10h-2.12zM59.30 69.23h2.12v2.10h-2.12zM65.65 69.23h2.12v2.10h-2.12zM69.89 69.23h4.24v2.10h-4.24zM78.36 69.23h6.35v2.10h-6.35zM88.95 69.23h2.12v2.10h-2.12zM93.18 69.23h2.12v2.10h-2.12zM2.12 71.32h2.12v2.10h-2.12zM12.71 71.32h6.35v2.10h-6.35zM25.41 71.32h2.12v2.10h-2.12zM33.88 71.32h8.47v2.10h-8.47zM65.65 71.32h2.12v2.10h-2.12zM69.89 71.32h2.12v2.10h-2.12zM74.12 71.32h6.35v2.10h-6.35zM86.83 71.32h2.12v2.10h-2.12zM0.00 73.42h10.59v2.10h-10.59zM14.82 73.42h2.12v2.10h-2.12zM19.06 73.42h4.24v2.10h-4.24zM29.65 73.42h6.35v2.10h-6.35zM42.36 73.42h6.35v2.10h-6.35zM50.83 73.42h8.47v2.10h-8.47zM61.42 73.42h2.12v2.10h-2.12zM65.65 73.42h2.12v2.10h-2.12zM69.89 73.42h4.24v2.10h-4.24zM76.24 73.42h2.12v2.10h-2.12zM80.48 73.42h4.24v2.10h-4.24zM93.18 73.42h2.12v2.10h-2.12zM4.24 75.52h2.12v2.10h-2.12zM8.47 75.52h2.12v2.10h-2.12zM12.71 75.52h6.35v2.10h-6.35zM23.30 75.52h4.24v2.10h-4.24zM29.65 75.52h2.12v2.10h-2.12zM33.88 75.52h6.35v2.10h-6.35zM42.36 75.52h10.59v2.10h-10.59zM57.18 75.52h4.24v2.10h-4.24zM69.89 75.52h4.24v2.10h-4.24zM76.24 75.52h10.59v2.10h-10.59zM91.06 75.52h4.24v2.10h-4.24zM16.94 77.62h4.24v2.10h-4.24zM27.53 77.62h2.12v2.10h-2.12zM38.12 77.62h2.12v2.10h-2.12zM42.36 77.62h2.12v2.10h-2.12zM50.83 77.62h2.12v2.10h-2.12zM57.18 77.62h2.12v2.10h-2.12zM63.53 77.62h2.12v2.10h-2.12zM69.89 77.62h8.47v2.10h-8.47zM84.71 77.62h2.12v2.10h-2.12zM88.95 77.62h2.12v2.10h-2.12zM0.00 79.72h14.82v2.10h-14.82zM16.94 79.72h2.12v2.10h-2.12zM21.18 79.72h2.12v2.10h-2.12zM25.41 79.72h4.24v2.10h-4.24zM31.77 79.72h4.24v2.10h-4.24zM40.24 79.72h4.24v2.10h-4.24zM46.59 79.72h2.12v2.10h-2.12zM50.83 79.72h2.12v2.10h-2.12zM57.18 79.72h2.12v2.10h-2.12zM61.42 79.72h2.12v2.10h-2.12zM65.65 79.72h2.12v2.10h-2.12zM76.24 79.72h2.12v2.10h-2.12zM80.48 79.72h2.12v2.10h-2.12zM84.71 79.72h4.24v2.10h-4.24zM93.18 79.72h2.12v2.10h-2.12zM0.00 81.81h2.12v2.10h-2.12zM12.71 81.81h2.12v2.10h-2.12zM25.41 81.81h6.35v2.10h-6.35zM36.00 81.81h8.47v2.10h-8.47zM50.83 81.81h2.12v2.10h-2.12zM61.42 81.81h4.24v2.10h-4.24zM72.00 81.81h2.12v2.10h-2.12zM76.24 81.81h2.12v2.10h-2.12zM84.71 81.81h10.59v2.10h-10.59zM0.00 83.91h2.12v2.10h-2.12zM4.24 83.91h6.35v2.10h-6.35zM12.71 83.91h2.12v2.10h-2.12zM21.18 83.91h6.35v2.10h-6.35zM33.88 83.91h4.24v2.10h-4.24zM40.24 83.91h12.71v2.10h-12.71zM55.06 83.91h2.12v2.10h-2.12zM59.30 83.91h8.47v2.10h-8.47zM69.89 83.91h16.94v2.10h-16.94zM91.06 83.91h4.24v2.10h-4.24zM0.00 86.01h2.12v2.10h-2.12zM4.24 86.01h6.35v2.10h-6.35zM12.71 86.01h2.12v2.10h-2.12zM16.94 86.01h2.12v2.10h-2.12zM21.18 86.01h2.12v2.10h-2.12zM25.41 86.01h2.12v2.10h-2.12zM29.65 86.01h2.12v2.10h-2.12zM33.88 86.01h6.35v2.10h-6.35zM44.47 86.01h4.24v2.10h-4.24zM50.83 86.01h2.12v2.10h-2.12zM55.06 86.01h4.24v2.10h-4.24zM63.53 86.01h6.35v2.10h-6.35zM72.00 86.01h6.35v2.10h-6.35zM86.83 86.01h4.24v2.10h-4.24zM93.18 86.01h2.12v2.10h-2.12zM0.00 88.11h2.12v2.10h-2.12zM4.24 88.11h6.35v2.10h-6.35zM12.71 88.11h2.12v2.10h-2.12zM19.06 88.11h2.12v2.10h-2.12zM23.30 88.11h4.24v2.10h-4.24zM29.65 88.11h6.35v2.10h-6.35zM38.12 88.11h2.12v2.10h-2.12zM42.36 88.11h2.12v2.10h-2.12zM46.59 88.11h2.12v2.10h-2.12zM55.06 88.11h2.12v2.10h-2.12zM59.30 88.11h2.12v2.10h-2.12zM63.53 88.11h2.12v2.10h-2.12zM69.89 88.11h2.12v2.10h-2.12zM78.36 88.11h2.12v2.10h-2.12zM82.59 88.11h8.47v2.10h-8.47zM93.18 88.11h2.12v2.10h-2.12zM0.00 90.20h2.12v2.10h-2.12zM12.71 90.20h2.12v2.10h-2.12zM16.94 90.20h2.12v2.10h-2.12zM23.30 90.20h6.35v2.10h-6.35zM31.77 90.20h8.47v2.10h-8.47zM44.47 90.20h2.12v2.10h-2.12zM50.83 90.20h2.12v2.10h-2.12zM57.18 90.20h4.24v2.10h-4.24zM65.65 90.20h2.12v2.10h-2.12zM72.00 90.20h8.47v2.10h-8.47zM91.06 90.20h2.12v2.10h-2.12zM0.00 92.30h14.82v2.10h-14.82zM16.94 92.30h2.12v2.10h-2.12zM21.18 92.30h4.24v2.10h-4.24zM40.24 92.30h2.12v2.10h-2.12zM44.47 92.30h2.12v2.10h-2.12zM48.71 92.30h2.12v2.10h-2.12zM57.18 92.30h2.12v2.10h-2.12zM61.42 92.30h2.12v2.10h-2.12zM65.65 92.30h4.24v2.10h-4.24zM72.00 92.30h2.12v2.10h-2.12zM80.48 92.30h4.24v2.10h-4.24zM86.83 92.30h8.47v2.10h-8.47z" fill="#111"/>
<circle cx="47.7" cy="47.4" r="10.9" fill="#fff"/><circle cx="47.7" cy="47.4" r="9.6" fill="#2fae3a"/>
<path d="M43.8 42.2L47.7 47L51.6 42.2M47.7 47V53.4M43.4 47.6H52M43.4 50.4H52" stroke="#fff" stroke-width="1.7" fill="none"/></svg>
<svg class="abs" style="left:1010px;top:513px" width="100" height="50" viewBox="1010 513 100 50">
<rect x="1010" y="513" width="100" height="50" fill="#fff"/>
<circle cx="1057" cy="531.4" r="11.2" fill="#1846a6"/>
<path d="M1057 526.2L1062.4 531.8L1057 537.2L1051.7 531.8Z" fill="#fff"/>
<path d="M1061.6 531L1069.5 524.2L1070 532.4Z" fill="#fff"/>
<path d="M1056.8 520.6L1058.3 519.6L1066.6 527.3L1065.4 528.4Z" fill="#fff"/>
<path d="M1066 519L1071 524L1069 526.2L1063.5 520.4Z" fill="#fff" opacity="0"/>
<text x="1020" y="553.4" font-family="Liberation Sans,sans-serif" font-weight="bold" font-size="7.6" textLength="74.8" lengthAdjust="spacingAndGlyphs" fill="#111" stroke="#111" stroke-width=".4">中国建设银行</text>
<text x="1024.8" y="559.3" font-family="Liberation Sans,sans-serif" font-size="5.6" textLength="64.4" lengthAdjust="spacingAndGlyphs" fill="#111" stroke="#222" stroke-width=".2">China Construction Bank</text>
</svg>
<svg class="abs" style="left:380px;top:470px" width="310" height="90" viewBox="380 470 310 90"><g transform="translate(422.2 514.05) scale(0.0904)"><path d="M-12 -97C-9 -165 -7 -235 -27 -325C-42 -375 -82 -400 -122 -400C-182 -400 -222 -355 -222 -300C-222 -205 -87 -125 -12 -97Z" fill="#e8472f" transform="rotate(0)"/><path d="M-12 -97C-9 -165 -7 -235 -27 -325C-42 -375 -82 -400 -122 -400C-182 -400 -222 -355 -222 -300C-222 -205 -87 -125 -12 -97Z" fill="#e8472f" transform="rotate(0) scale(-1 1)"/><path d="M-12 -97C-9 -165 -7 -235 -27 -325C-42 -375 -82 -400 -122 -400C-182 -400 -222 -355 -222 -300C-222 -205 -87 -125 -12 -97Z" fill="#f7a707" transform="translate(48 0) scale(.88 1) rotate(90)"/><path d="M-12 -97C-9 -165 -7 -235 -27 -325C-42 -375 -82 -400 -122 -400C-182 -400 -222 -355 -222 -300C-222 -205 -87 -125 -12 -97Z" fill="#f7a707" transform="translate(48 0) scale(.88 1) rotate(90) scale(-1 1)"/><path d="M-12 -97C-9 -165 -7 -235 -27 -325C-42 -375 -82 -400 -122 -400C-182 -400 -222 -355 -222 -300C-222 -205 -87 -125 -12 -97Z" fill="#5bb531" transform="rotate(180)"/><path d="M-12 -97C-9 -165 -7 -235 -27 -325C-42 -375 -82 -400 -122 -400C-182 -400 -222 -355 -222 -300C-222 -205 -87 -125 -12 -97Z" fill="#5bb531" transform="rotate(180) scale(-1 1)"/><path d="M-12 -97C-9 -165 -7 -235 -27 -325C-42 -375 -82 -400 -122 -400C-182 -400 -222 -355 -222 -300C-222 -205 -87 -125 -12 -97Z" fill="#00a9ec" transform="rotate(270)"/><path d="M-12 -97C-9 -165 -7 -235 -27 -325C-42 -375 -82 -400 -122 -400C-182 -400 -222 -355 -222 -300C-222 -205 -87 -125 -12 -97Z" fill="#00a9ec" transform="rotate(270) scale(-1 1)"/><ellipse cx="36" cy="0" rx="93" ry="81" fill="#f7a707"/><path d="M-14 -76Q10 0 -14 76M55 -86Q84 0 55 86" stroke="#f1f1f1" stroke-width="17" fill="none"/></g><g fill="#404040"><path fill-rule="evenodd" d="M473.9 489.8L496.1 489.5L498.9 487.9L498.7 498.2L489.2 498.2L487.0 508.3L498.7 508.3L498.7 547.0L479.1 547.0L479.1 528.4L471.1 517.9L476.3 514.3L480.3 498.2L473.9 498.2ZM487.0 519.2L490.0 519.2L490.0 536.5L487.0 536.5Z"/><path fill-rule="evenodd" d="M501.7 488.9L528.8 488.6L532.2 486.9L531.0 513.9L535.9 512.1L534.6 549.9L513.3 545.0L523.1 540.1L523.1 535.7L500.1 535.7L500.1 528.4L523.1 526.2L523.1 522.8L503.1 522.8L503.9 499.8L501.7 499.8ZM512.8 499.4L520.9 499.4L520.7 513.5L512.0 513.5Z"/><path fill-rule="evenodd" d="M568.3 487.4L583.0 485.5L581.3 491.5L570.9 491.5Z"/><path fill-rule="evenodd" d="M546.1 491.3L608.1 491.3L607.2 498.7L546.1 498.7Z"/><path fill-rule="evenodd" d="M557.8 501.4L571.7 500.2L569.3 505.2L562.0 505.2Z"/><path fill-rule="evenodd" d="M582.1 500.2L595.9 501.8L591.9 505.2L584.6 505.2Z"/><path fill-rule="evenodd" d="M548.6 505.0L605.6 505.0L604.8 549.6L582.1 544.6L595.1 539.9L595.6 513.3L557.8 513.3L557.8 549.6L548.6 549.6Z"/><path fill-rule="evenodd" d="M557.8 516.5L577.4 513.7L595.6 516.5L595.6 522.0L591.9 527.2L589.7 525.2L589.7 522.0L586.1 521.6L577.2 515.7L567.9 521.6L564.3 522.0L564.3 525.4L561.5 527.5L557.8 522.0Z"/><path fill-rule="evenodd" d="M564.3 521.8L589.7 521.8L589.7 540.7L564.3 540.7ZM572.8 530.5L581.0 530.5L581.0 533.4L572.8 533.4Z"/><path fill-rule="evenodd" d="M619.4 488.9L678.0 488.9L678.0 548.8L672.6 548.8L654.1 544.6L668.6 535.7L668.6 497.4L628.7 497.4L628.7 549.6L619.4 549.6Z"/><path fill-rule="evenodd" d="M628.1 503.4L635.2 501.0L638.7 511.9L642.3 501.0L655.4 501.0L658.1 510.3L661.0 501.0L669.2 504.2L669.2 511.6L662.0 520.4L669.2 530.4L669.2 536.5L663.0 539.9L657.7 530.7L652.5 540.4L645.2 540.1L639.5 531.5L634.7 540.5L628.1 536.9L628.1 532.9L635.7 520.4L628.1 507.4ZM648.8 510.7L653.7 520.4L648.8 529.4L644.0 520.4Z"/></g></svg>
</div>
<div id="ft">Copyright ©2017-2019 Bindex All Rights Reserved</div>
</body>
</html>
